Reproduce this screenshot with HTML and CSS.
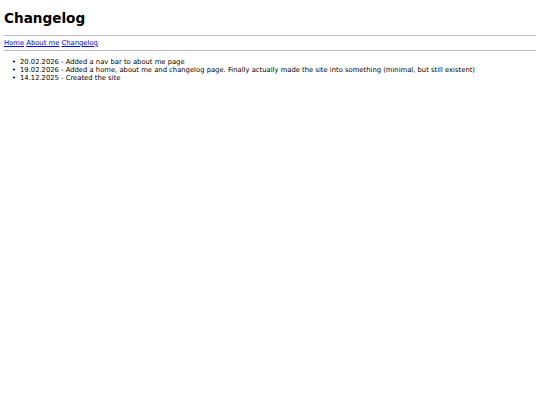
FILE: index.html
```html
<!DOCTYPE html>
<html>
<head>
<meta charset="utf-8">
<title>Changelog</title>
<link rel="stylesheet" href="styles.css">
</head>
<body class="page">
<h1 class="title">Changelog</h1>
<hr class="rule">
<nav class="nav"><a href="#">Home</a> <a href="#">About me</a> <a href="#">Changelog</a></nav>
<hr class="rule">
<ul class="log">
<li>20.02.2026 - Added a nav bar to about me page</li>
<li>19.02.2026 - Added a home, about me and changelog page. Finally actually made the site into something (minimal, but still existent)</li>
<li>14.12.2025 - Created the site</li>
</ul>
</body>
</html>
```
FILE: styles.css
```css
html { background: #fff; }
.page {
  margin: 4px;
  font-family: "DejaVu Sans", sans-serif;
  font-size: 6.8px;
  color: #000;
}
.title {
  font-size: 2em;
  font-weight: bold;
  margin: 6px 0 8.5px;
}
.rule {
  margin: 0.5em 0;
  border: 0;
  border-top: 1px solid #bbb;
  height: 0;
}
.nav a { color: #00e; text-decoration: underline; }
.log {
  margin: 1em 0;
  padding-left: 16px;
  list-style: none;
}
.log li::before {
  content: "\2022";
  display: inline-block;
  width: 8px;
  margin-left: -8px;
}
```
